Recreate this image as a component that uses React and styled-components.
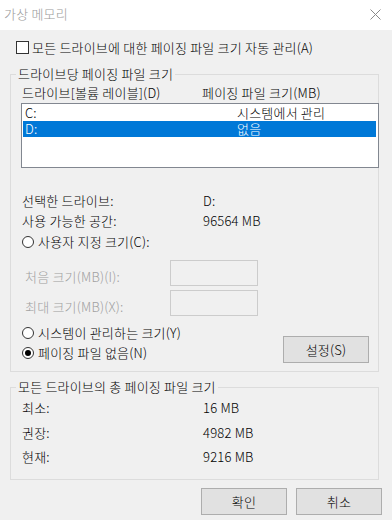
import React from 'react';
import styled, { createGlobalStyle } from 'styled-components';

const Global = createGlobalStyle`
  html, body { margin: 0; padding: 0; background: #f0f0f0; }
  body {
    font-family: "Noto Sans CJK KR", "Noto Sans", sans-serif;
    font-size: 13px;
    font-weight: 300;
    letter-spacing: 0.2px;
    color: #000;
  }
  * { box-sizing: border-box; }
`;

const Window = styled.div`
  width: 392px;
  height: 520px;
  background: #f0f0f0;
  display: flex;
  flex-direction: column;
  overflow: hidden;
`;

const TitleBar = styled.div`
  height: 30px;
  flex-shrink: 0;
  background: #fff;
  display: flex;
  align-items: center;
  justify-content: space-between;
  padding: 0 11px 0 4px;
`;

const Title = styled.span`
  color: #999;
  line-height: 15px;
  margin-top: -4px;
`;

const CloseIcon = styled.svg`
  display: block;
  margin-top: -2px;
`;

const CheckRow = styled.label`
  display: flex;
  align-items: center;
  height: 15px;
  line-height: 15px;
  margin-top: 10px;
  padding-left: 16px;
`;

const CheckBox = styled.span`
  width: 13px;
  height: 13px;
  border: 1px solid #333;
  background: #fff;
  margin-right: 3px;
  flex-shrink: 0;
`;

const Group = styled.div`
  margin: ${p => p.$mt}px 13px 0 10px;
  border: 1px solid #dcdcdc;
  padding: 0 9px ${p => p.$pb}px 11px;
`;

const Legend = styled.div`
  width: fit-content;
  margin: -9px 0 0 -6px;
  padding: 0 2px;
  background: #f0f0f0;
  line-height: 15px;
  white-space: nowrap;
`;

const HeaderRow = styled.div`
  display: grid;
  grid-template-columns: 180px 1fr;
  line-height: 15px;
  margin-top: 4px;
`;

const ListBox = styled.div`
  margin: 3px -10px 0 -1px;
  height: 65px;
  background: #fff;
  border: 1px solid #828790;
  padding: 1px 2px 0 1px;
`;

const ListRow = styled.div`
  display: grid;
  grid-template-columns: 212px 1fr;
  height: 16px;
  line-height: 16px;
  padding-left: 2px;
  background: ${p => (p.$selected ? '#0078d7' : 'transparent')};
  color: ${p => (p.$selected ? '#fff' : '#000')};
`;

const InfoRow = styled.div`
  display: grid;
  grid-template-columns: 181px 1fr;
  line-height: 15px;
  margin-top: ${p => p.$mt}px;
`;

const RadioItem = styled.label`
  display: flex;
  align-items: center;
  gap: 4px;
  height: 15px;
  line-height: 15px;
  margin-top: ${p => p.$mt || 0}px;
`;

const RadioCircle = styled.span`
  width: 12px;
  height: 12px;
  flex-shrink: 0;
  border: 1px solid #333;
  border-radius: 50%;
  background: #fff;
  display: flex;
  align-items: center;
  justify-content: center;
  &::after {
    content: '';
    width: 6px;
    height: 6px;
    border-radius: 50%;
    background: ${p => (p.$checked ? '#000' : 'transparent')};
  }
`;

const FieldRow = styled.div`
  display: flex;
  align-items: flex-start;
  margin-top: ${p => p.$mt}px;
`;

const FieldLabel = styled.span`
  width: 148px;
  padding: 9px 0 0 3px;
  line-height: 15px;
  color: #a0a0a0;
`;

const TextBox = styled.div`
  width: 88px;
  height: 26px;
  border: 1px solid #cccccc;
  background: #f0f0f0;
`;

const OptionsArea = styled.div`
  display: flex;
  justify-content: space-between;
  align-items: flex-start;
  margin-top: 9px;
`;

const RadioColumn = styled.div`
  display: flex;
  flex-direction: column;
  gap: 5px;
`;

const Button = styled.button`
  width: 86px;
  height: 27px;
  padding: 0;
  background: #e1e1e1;
  border: 1px solid #adadad;
  font-family: inherit;
  font-size: 13px;
  font-weight: inherit;
  letter-spacing: inherit;
  line-height: 15px;
  color: #000;
  margin-top: ${p => p.$mt || 0}px;
`;

const ButtonRow = styled.div`
  display: flex;
  justify-content: flex-end;
  gap: 9px;
  padding-right: 10px;
  margin-top: 8px;
`;

export default function App() {
  return (
    <>
      <Global />
      <Window>
        <TitleBar>
          <Title>가상 메모리</Title>
          <CloseIcon width="11" height="11" viewBox="0 0 11 11">
            <path d="M0.5 0.5 L10.5 10.5 M10.5 0.5 L0.5 10.5" stroke="#8a8a8a" strokeWidth="1" fill="none" />
          </CloseIcon>
        </TitleBar>

        <CheckRow>
          <CheckBox />
          모든 드라이브에 대한 페이징 파일 크기 자동 관리(A)
        </CheckRow>

        <Group $mt={19} $pb={8}>
          <Legend>드라이브당 페이징 파일 크기</Legend>
          <HeaderRow>
            <span>드라이브[볼륨 레이블](D)</span>
            <span>페이징 파일 크기(MB)</span>
          </HeaderRow>
          <ListBox>
            <ListRow>
              <span>C:</span>
              <span>시스템에서 관리</span>
            </ListRow>
            <ListRow $selected>
              <span>D:</span>
              <span>없음</span>
            </ListRow>
          </ListBox>

          <InfoRow $mt={25}>
            <span>선택한 드라이브:</span>
            <span>D:</span>
          </InfoRow>
          <InfoRow $mt={5}>
            <span>사용 가능한 공간:</span>
            <span>96564 MB</span>
          </InfoRow>

          <RadioItem $mt={6}>
            <RadioCircle />
            사용자 지정 크기(C):
          </RadioItem>

          <FieldRow $mt={11}>
            <FieldLabel>처음 크기(MB)(I):</FieldLabel>
            <TextBox />
          </FieldRow>
          <FieldRow $mt={4}>
            <FieldLabel>최대 크기(MB)(X):</FieldLabel>
            <TextBox />
          </FieldRow>

          <OptionsArea>
            <RadioColumn>
              <RadioItem>
                <RadioCircle />
                시스템이 관리하는 크기(Y)
              </RadioItem>
              <RadioItem>
                <RadioCircle $checked />
                페이징 파일 없음(N)
              </RadioItem>
            </RadioColumn>
            <Button $mt={11}>설정(S)</Button>
          </OptionsArea>
        </Group>

        <Group $mt={15} $pb={15}>
          <Legend>모든 드라이브의 총 페이징 파일 크기</Legend>
          <InfoRow $mt={6}>
            <span>최소:</span>
            <span>16 MB</span>
          </InfoRow>
          <InfoRow $mt={10}>
            <span>권장:</span>
            <span>4982 MB</span>
          </InfoRow>
          <InfoRow $mt={9}>
            <span>현재:</span>
            <span>9216 MB</span>
          </InfoRow>
        </Group>

        <ButtonRow>
          <Button>확인</Button>
          <Button>취소</Button>
        </ButtonRow>
      </Window>
    </>
  );
}
